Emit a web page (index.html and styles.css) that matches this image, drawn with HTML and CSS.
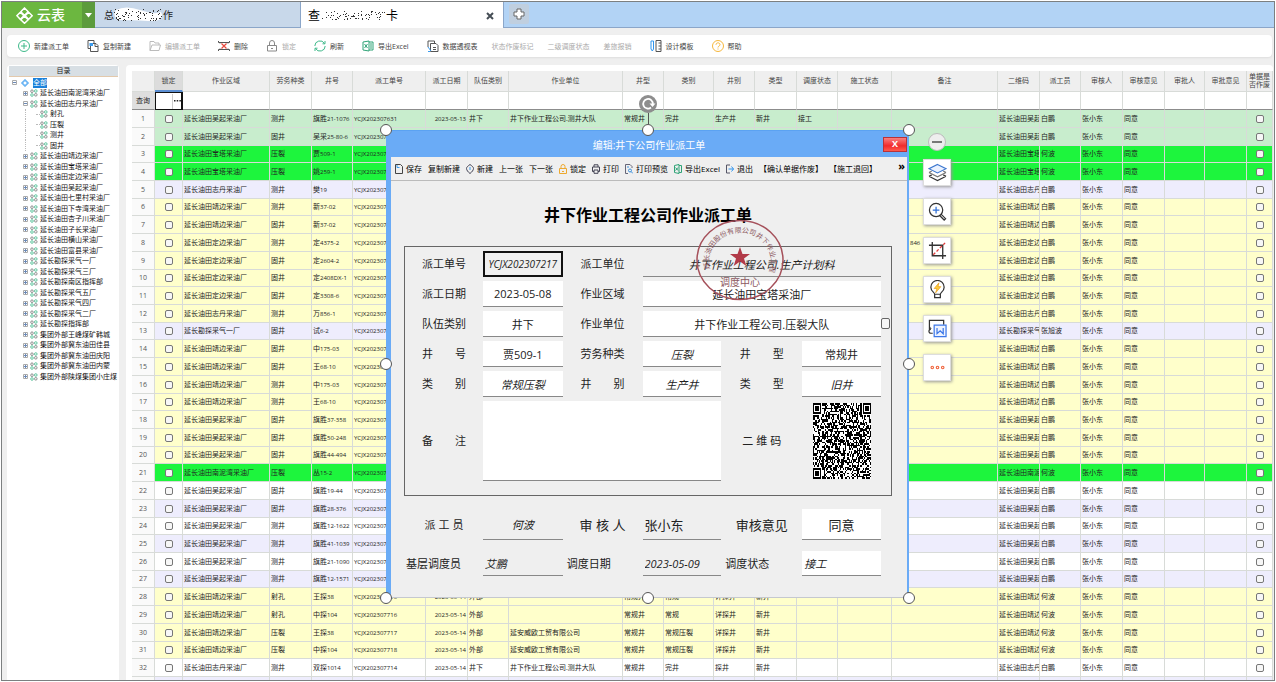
FILE: index.html
```html
<!DOCTYPE html>
<html lang="zh-CN">
<head>
  <meta charset="utf-8">
  <title>云表</title>
  <link rel="stylesheet" href="styles.css">
</head>
<body>
  <div class="app">
    <header class="titlebar">
      <a class="logo" href="#">
        <svg width="17" height="17" viewBox="0 0 17 17" fill="none" stroke="#fff" stroke-width="1.5">
          <path d="M8.500 1l3.700 3.700-3.700 3.700-3.700-3.700zM4.300 5.200l3.600 3.500-3.600 3.600L.9 8.700zM12.700 5.200l3.500 3.500-3.500 3.600-3.600-3.600zM8.500 9.200l3.700 3.500-3.700 3.600-3.700-3.600z"/>
        </svg>
        <span>云表</span>
      </a>
      <button class="logo-menu" aria-label="菜单"><svg width="7" height="5" viewBox="0 0 7 5"><path d="M0 0h7L3.500 4.500z" fill="#fff"/></svg></button>
      <div class="tab tab-first"><span>总</span><svg class="smudge" data-seed="3" data-white="1" width="49" height="16" viewBox="0 0 49 16"></svg><span>作</span></div>
      <div class="tab tab-active"><span>查</span><svg class="smudge" data-seed="9" width="66" height="13" viewBox="0 0 66 13"></svg><span>卡</span>
        <button class="tab-close" aria-label="关闭"><svg width="8" height="8" viewBox="0 0 8 8"><path d="M1 1l6 6M7 1L1 7" stroke="#454d55" stroke-width="2"/></svg></button>
      </div>
      <button class="tab-add" aria-label="新标签"><svg width="12" height="12" viewBox="0 0 12 12"><path d="M4 1h4v3h3v4H8v3H4V8H1V4h3z" fill="#fff" stroke="#666" stroke-width="1"/></svg></button>
    </header>

    <nav class="toolbar">
      <button><svg viewBox="0 0 12 12" fill="none" stroke="#3fb98a"><circle cx="6" cy="6" r="5.500"/><path d="M6 3v6M3 6h6"/></svg>新建派工单</button>
      <button><svg viewBox="0 0 12 12" fill="none" stroke="#555"><path d="M3.500 3.500H9L11 5.500v6H3.500zM8 3.500v3h3"/><path d="M3 8.500H1v-8h6V3"/><path d="M2.500 3h3.500v3H2.500z" fill="#3a9cf0" stroke="none"/></svg>复制新建</button>
      <button disabled><svg viewBox="0 0 12 12" fill="none" stroke="#bbb"><path d="M1 10.500v-9h4l1 1.500h4v2M1 10.500L3 5h8.500l-1.500 5.500z"/></svg>编辑派工单</button>
      <button><svg viewBox="0 0 12 12" fill="none" stroke="#555"><path d="M.5 1v1.500h11V1M.5 11V9.500h11V11M2 2.500v1M10 2.500v1M2 9.500v-1M10 9.500v-1"/><path d="M3.500 3.500l5 5M8.500 3.500l-5 5" stroke="#e8483c" stroke-width="1.200"/></svg>删除</button>
      <button disabled><svg viewBox="0 0 12 12" fill="none" stroke="#888"><path d="M1.500 5.500h9v5.500h-9zM3.500 5.500V3a2.500 2.500 0 0 1 5 0v2.500M5 8.500h2"/></svg>锁定</button>
      <button><svg viewBox="0 0 12 12" fill="none" stroke="#3fb98a"><path d="M.8 6A5.200 5.200 0 0 1 10.500 3.500M11.200 6a5.200 5.200 0 0 1-9.700 2.500"/><path d="M11 1v2.800H8.500M1 11V8.200h2.500"/></svg>刷新</button>
      <button><svg viewBox="0 0 12 12" fill="none" stroke="#2fa377"><path d="M1 2l6-1v10l-6-1zM7 2h4v8H7"/><path d="M2.500 4l3 4M5.500 4l-3 4"/><path d="M9 3v6"/></svg>导出Excel</button>
      <button><svg viewBox="0 0 12 12" fill="none" stroke="#555"><path d="M1 7V1h6.500v2M3.500 3.500H9l2 2v6H3.500zM6 7.500h3M6 9.500h3"/><path d="M1 7l3 4M1 11.500h2" stroke="#3a9cf0"/></svg>数据透视表</button>
      <button class="plain" disabled>状态作废标记</button>
      <button class="plain" disabled>二级调度状态</button>
      <button class="plain" disabled>差旅报销</button>
      <button><svg viewBox="0 0 12 12" fill="none" stroke="#555"><path d="M6 .5h5v11H6zM8.500 3H11M8.500 6H11M8.500 9H11"/><path d="M1 1h2.500v8L2.300 11 1 9z" stroke="#2f95ee"/></svg>设计模板</button>
      <button><svg viewBox="0 0 12 12" fill="none" stroke="#f6b73c"><circle cx="6" cy="6" r="5.500"/><path d="M4 4.800c0-2.600 4-2.600 4 0C8 6 6 6 6 7.500M6 8.500v1"/></svg>帮助</button>
    </nav>

    <div class="workspace">
      <aside class="sidebar">
        <div class="sidebar-title">目录</div>
        <ul class="tree" id="tree"></ul>
      </aside>
      <main class="sheet">
        <table class="grid">
          <colgroup id="cols"></colgroup>
          <thead>
            <tr class="head" id="head"></tr>
            <tr class="query" id="query"></tr>
          </thead>
          <tbody id="rows"></tbody>
        </table>
      </main>
    </div>
  </div>

  <section class="frame">
    <div class="dialog">
      <div class="dialog-title"><span>编辑:井下公司作业派工单</span><button class="close">X</button></div>
      <div class="dialog-tools">
        <button><svg viewBox="0 0 8 10" fill="none" stroke="#444"><path d="M.5 .5h5L7.500 2.500v7h-7z"/><path d="M2 1v2.500h2.500" stroke="#3a9cf0"/></svg>保存</button>
        <button>复制新建</button>
        <button><svg viewBox="0 0 8 10" fill="none" stroke="#445"><path d="M4 .5C6 2 7.500 3 7.500 4.500S6 8 4 9.500C2 8 .5 6 .5 4.500S2 2 4 .5z"/><path d="M4 3v3" stroke="#3a9cf0"/></svg>新建</button>
        <button>上一张</button>
        <button>下一张</button>
        <button><svg viewBox="0 0 8 10" fill="none" stroke="#eda92f"><path d="M.5 4.500h7v5h-7zM2 4.500V2.500a2 2 0 0 1 4 0v2M3 7.500h2"/></svg>锁定</button>
        <button><svg viewBox="0 0 8 10" fill="none" stroke="#445"><path d="M2 3V.8h4V3M2 7.500H.5V3h7v4.500H6M2 6h4v3.300H2z"/></svg>打印</button>
        <button><svg viewBox="0 0 8 10" fill="none" stroke="#3a8fdc"><path d="M3 9.500H.5v-9H5L7 2.500V4" stroke="#667"/><circle cx="5" cy="6.500" r="1.500"/><path d="M6 7.500l2 2M2 3h2"/></svg>打印预览</button>
        <button><svg viewBox="0 0 8 10" fill="none" stroke="#2fa377"><path d="M.5 1.500L5 .5v9L.5 8.500zM5 1.500h2.500v7H5M1.500 3.500l2.500 3M4 3.500l-2.500 3"/></svg>导出Excel</button>
        <button><svg viewBox="0 0 8 10" fill="none" stroke="#2f95ee"><path d="M4 1H.5v8H4" stroke="#556"/><path d="M2.500 5h5M5.500 2.500L7.500 5l-2 2.500"/></svg>退出</button>
        <button>【确认单据作废】</button>
        <button>【施工退回】</button>
        <button class="more">»</button>
      </div>

      <form class="order">
        <h1>井下作业工程公司作业派工单</h1>
        <div class="box">
          <label for="no">派工单号</label><input id="no" class="current" value="YCJX202307217">
          <label for="unit">派工单位</label><input id="unit" class="wide calc" value="井下作业工程公司.生产计划科">
          <label for="date">派工日期</label><input id="date" value="2023-05-08">
          <label for="area">作业区域</label><input id="area" class="wide" value="延长油田宝塔采油厂">
          <label for="team">队伍类别</label><input id="team" value="井下">
          <label for="workunit">作业单位</label><input id="workunit" class="wide" value="井下作业工程公司.压裂大队">
          <label for="well">井 号</label><input id="well" value="贾509-1">
          <label for="service">劳务种类</label><input id="service" class="slant" value="压裂">
          <label for="welltype">井 型</label><input id="welltype" value="常规井">
          <label for="kind">类 别</label><input id="kind" class="slant" value="常规压裂">
          <label for="wellkind">井 别</label><input id="wellkind" class="slant" value="生产井">
          <label for="type">类 型</label><input id="type" class="slant" value="旧井">
          <label for="remark">备 注</label><textarea id="remark"></textarea>
          <span class="label short">二 维 码</span><svg class="qr" id="qr" viewBox="0 0 49 49" preserveAspectRatio="none" shape-rendering="crispEdges"></svg>
          <input type="checkbox" class="box-check" aria-label="选择作业单位">
        </div>
        <div class="sign">
          <label for="sender" class="short">派 工 员</label><input id="sender" class="calc" value="何波">
          <label for="auditor" class="big">审 核 人</label><input id="auditor" class="bare big" value="张小东">
          <label for="opinion" class="big">审核意见</label><input id="opinion" class="big" value="同意">
        </div>
        <div class="dispatch">
          <label for="base">基层调度员</label><input id="base" class="calc left" value="艾鹏">
          <label for="ddate">调度日期</label><input id="ddate" class="calc left" value="2023-05-09">
          <label for="dstate">调度状态</label><input id="dstate" class="slant left" value="接工">
        </div>
        <svg class="seal" viewBox="0 0 88 82" width="88" height="82">
          <ellipse cx="44" cy="41" rx="43" ry="39.500" fill="none" stroke="#a5505a" stroke-width="1.500"/>
          <path id="arc" d="M14 50A31 29 0 1 1 74 50" fill="none"/>
          <text class="seal-ring"><textPath href="#arc">延长油田股份有限公司井下作业工程</textPath></text>
          <path d="M44 28l2.500 7h7.500l-6 4.500 2.300 7.500-6.300-4.500-6.300 4.500 2.300-7.500-6-4.500h7.500z" fill="#b23a48"/>
          <text class="seal-name" x="44" y="67" text-anchor="middle">调度中心</text>
        </svg>
      </form>
    </div>
    <span class="handle nw"></span><span class="handle n"></span><span class="handle ne"></span>
    <span class="handle w"></span><span class="handle e"></span>
    <span class="handle sw"></span><span class="handle s"></span><span class="handle se"></span>
    <span class="stem"></span>
    <span class="rotate"><svg width="18" height="18" viewBox="0 0 18 18"><circle cx="9" cy="9" r="9" fill="#8d8d8d"/><path d="M12 12.500A4.800 4.800 0 1 1 13.800 9" fill="none" stroke="#fff" stroke-width="1.800"/><path d="M10.500 8.500h6L13.500 12z" fill="#fff"/></svg></span>
  </section>

  <div class="floating">
    <button class="minus" aria-label="收起"><svg width="10" height="4" viewBox="0 0 10 4"><path d="M0 2h10" stroke="#777" stroke-width="2"/></svg></button>
    <button class="tool" aria-label="图层"><svg viewBox="0 0 20 20" fill="none" stroke="#333" stroke-width="1.200"><path d="M1 14l9 4.500 9-4.500M1 14l3-1.500M19 14l-3-1.500"/><path d="M1 10l9 4.500 9-4.500M1 10l3-1.500M19 10l-3-1.500" stroke="#777"/><path d="M10 1.500L19 6l-9 4.500L1 6z" fill="#eaf2ff" stroke="#3d78cf"/></svg></button>
    <button class="tool" aria-label="放大"><svg viewBox="0 0 20 20" fill="none" stroke="#333" stroke-width="1.300"><circle cx="8.500" cy="8.500" r="7"/><path d="M13.500 12.500l5 5-1.500 1.500-5-5"/><path d="M8.500 5v7M5 8.500h7" stroke="#2f6fd6"/></svg></button>
    <button class="tool" aria-label="裁剪"><svg viewBox="0 0 20 20" fill="none" stroke="#333" stroke-width="1.400"><path d="M4.500 1v14.500H19M1 4.500h14.500V19"/><path d="M5.500 14.500L18 2" stroke="#e03a3a" stroke-dasharray="3 2"/></svg></button>
    <button class="tool" aria-label="提示"><svg viewBox="0 0 20 20" fill="none" stroke="#333" stroke-width="1.300"><path d="M7 15c0-2-4-3-4-7.500a7 7 0 0 1 14 0C17 12 13 13 13 15zM7 15v3.500h6V15"/><path d="M11.500 3l-5 6h3l-1.500 4.500 5.500-6.500h-3z" fill="#ffcf3d" stroke="#e8a020" stroke-width=".8"/></svg></button>
    <button class="tool" aria-label="转为文档"><svg viewBox="0 0 20 20" fill="none" stroke="#333" stroke-width="1.300"><path d="M5 15H3a2 2 0 0 1 0-4M1.500 11V1.500h15V6M1.500 8a2 2 0 0 0 2 2"/><path d="M6.500 6.500h12.500v12H6.500z" fill="#edf3ff" stroke="#3d78e8"/><path d="M9.500 9.500v6l3.300-3 3.200 3v-6" stroke="#3d78e8"/></svg></button>
    <button class="tool" aria-label="更多"><svg viewBox="0 0 20 20" fill="none" stroke="#f0643c" stroke-width="1.200"><circle cx="4.500" cy="10" r="1.300"/><circle cx="10" cy="10" r="1.300"/><circle cx="15.500" cy="10" r="1.300"/></svg></button>
  </div>

  <script src="script.js"></script>
</body>
</html>
```

FILE: styles.css
```css
* {
  box-sizing: border-box;
}
body {
  margin: 1px;
  font-family: "Open Sans", "Noto Sans CJK SC", sans-serif;
  font-size: 7px;
  color: #222;
  background: #fff;
  overflow: hidden;
}
button, input, textarea {
  font: inherit;
  color: inherit;
  margin: 0;
}
button {
  border: none;
  background: none;
  padding: 0;
  cursor: pointer;
}
.app {
  display: flex;
  flex-direction: column;
  height: calc(100vh - 2px);
  border: 1px solid #7c7f80;
  background: #efefef;
}

/* tabs */
.titlebar {
  display: flex;
  flex: none;
  height: 26px;
  background: #b2d3f5;
  border-bottom: 1px solid #8ba6c9;
}
.logo {
  display: flex;
  align-items: center;
  gap: 4px;
  width: 80px;
  padding-left: 14px;
  height: 26px;
  background: #6cb740;
  color: #fff;
  font-size: 14px;
  font-weight: 500;
  line-height: 20px;
  text-decoration: none;
}
.logo-menu {
  width: 13px;
  height: 26px;
  background: #5c9b3c;
}
.tab {
  display: flex;
  align-items: center;
  width: 205px;
  padding-left: 9px;
  font-size: 10px;
  background: #c8d8ea;
}
.tab-active {
  width: 204px;
  height: 26px;
  padding: 0 9px 0 7px;
  background: #fff;
  border-left: 1px solid #8ba6c9;
  border-right: 1px solid #8ba6c9;
  font-size: 12px;
  color: #000;
}
.tab-close {
  margin-left: auto;
}
.tab-add {
  display: flex;
  align-items: center;
  justify-content: center;
  width: 20px;
  height: 20px;
  margin: 2px 5px;
  border-radius: 2px;
  background: #c0cfdf;
}

/* main toolbar */
.toolbar {
  display: flex;
  flex: none;
  gap: 14px;
  height: 22px;
  margin: 7px 2px 8px 5px;
  padding-left: 7px;
  border-radius: 4px;
  background: #fff;
  box-shadow: 0 1px 2px #ddd;
  color: #444;
}
.toolbar button {
  display: flex;
  align-items: center;
  gap: 4px;
  padding-left: 4px;
  white-space: nowrap;
}
.toolbar .plain {
  padding-left: 0;
}
.toolbar button:disabled {
  color: #aaa;
}
.toolbar svg {
  width: 12px;
  height: 12px;
}

.workspace {
  display: flex;
  flex: 1;
  gap: 7px;
  min-height: 0;
  padding: 0 1px 0 5px;
}

/* tree */
.sidebar {
  width: 112px;
  flex: none;
  padding: 1px 1px 0 2px;
  border-radius: 4px 4px 0 0;
  background: #fff;
}
.sidebar-title {
  height: 11px;
  line-height: 10px;
  text-align: center;
  background: #d8dfe4;
  border-bottom: 1px solid #e3c9ac;
}
.tree {
  list-style: none;
  margin: 0;
  padding: 0;
}
.tree li {
  display: flex;
  align-items: center;
  gap: 2px;
  height: 10px;
  padding-left: 14px;
  line-height: 10px;
  white-space: nowrap;
  color: #111;
}
.tree li:nth-child(odd) {
  height: 11px;
}
.tree .root {
  padding-left: 3px;
  gap: 4px;
}
.tree .leaf {
  margin-left: 16px;
  padding-left: 10px;
  border-left: 1px dotted #bbb;
}
.tree .leaf::before {
  content: "";
  width: 4px;
  margin-right: -2px;
  border-top: 1px dotted #bbb;
}
.tree .root span {
  background: #1a80d9;
  color: #fff;
}
.tree svg {
  flex: none;
}
.tree .toggle {
  width: 5px;
  height: 5px;
}
.tree .node {
  width: 8px;
  height: 8px;
}

/* data grid */
.sheet {
  flex: 1;
  min-width: 0;
  padding: 6px 0 0 6px;
  border-radius: 4px 4px 0 0;
  background: #fff;
  overflow: hidden;
}
.grid {
  width: 100%;
  table-layout: fixed;
  border-collapse: separate;
  border-spacing: 0;
}
.grid th, .grid td {
  padding: 0 1px;
  border-right: 1px solid #d8dbd8;
  border-bottom: 1px solid #d8dbd8;
  line-height: 8px;
  font-weight: normal;
  text-align: left;
  white-space: nowrap;
  overflow: hidden;
}
.grid .head th {
  height: 21px;
  background: #efefef;
  color: #444;
  text-align: center;
  white-space: normal;
}
.grid .head .picked {
  background: #dcdcdc;
  border-bottom: 2px solid #5b8ed2;
}
.grid .query td, .grid .query th {
  height: 18px;
  border-bottom-color: #8c8c8c;
}
.grid .query th {
  background: #dedede;
  text-align: center;
}
.grid .query .picked {
  padding: 0;
  border: 1px solid #111;
  border-right-width: 2px;
}
.grid .query button {
  display: flex;
  align-items: center;
  justify-content: center;
  width: 9px;
  height: 15px;
  margin-left: auto;
  border-left: 1px solid #ccc;
}
.grid tbody tr {
  height: 18px;
}
.grid tbody tr:nth-child(7n+3), .grid tbody tr:nth-child(7n+6) {
  height: 17px;
}
.grid tbody th {
  background: #fafafa;
  color: #555;
  text-align: center;
}
.grid .code, .grid small {
  font-size: 6px;
}
.grid .date {
  font-size: 6px;
  text-align: right;
}
.grid .remark {
  font-size: 6px;
  padding-left: 18px;
}
.grid .tick {
  text-align: center;
}
.grid input {
  display: block;
  appearance: none;
  width: 8px;
  height: 8px;
  margin: 0 auto;
  border: 1px solid #777;
  border-radius: 2px;
  background: #f7f7f7;
}
.mint {
  background: #c8edcd;
}
.green {
  background: #1df53d;
}
.lilac {
  background: #eeedfd;
}
.yellow {
  background: #ffffcb;
}

/* dialog with its selection frame */
.frame {
  position: absolute;
  left: 386px;
  top: 130px;
  width: 523px;
}
.dialog {
  border: 1px solid #c5c8cf;
  border-top: 1px solid #5ba2f2;
  border-left: 5px solid #6aabf6;
  border-right: 2px solid #6aabf6;
  background: #efefef;
}
.dialog-title {
  display: flex;
  align-items: center;
  height: 26px;
  background: #6aabf6;
  color: #fff;
  font-size: 10px;
}
.dialog-title span {
  flex: 1;
  padding-left: 24px;
  text-align: center;
}
.close {
  width: 24px;
  height: 15px;
  border: 1px solid #b93238;
  background: linear-gradient(#f98080, #f12a2c 60%, #ff5a4c);
  color: #fff;
  font-size: 9px;
  font-weight: bold;
  line-height: 12px;
}
.dialog-tools {
  display: flex;
  gap: 6px;
  height: 24px;
  padding-left: 4px;
  border-bottom: 1px solid #bbb;
  font-size: 8px;
  color: #000;
}
.dialog-tools button {
  display: flex;
  align-items: center;
  gap: 3px;
  flex: none;
}
.dialog-tools svg {
  width: 8px;
  height: 10px;
}
.dialog-tools .more {
  margin: 0 2px 6px auto;
  font-size: 11px;
  font-weight: bold;
}
.order {
  position: relative;
  padding: 22px 15px 21px 13px;
  font-size: 11px;
}
.order h1 {
  margin: 0 0 19px;
  font-size: 16px;
  line-height: 24px;
  text-align: center;
  color: #000;
}
.box {
  position: relative;
  display: grid;
  grid-template-columns: 78fr 80fr 80fr 79fr 81fr 79fr;
  grid-template-rows: repeat(5, 26px) 80px;
  row-gap: 4px;
  padding: 4px 10px 14px 0;
  border: 1px solid #666;
}
.order label, .label {
  align-self: center;
  justify-self: center;
  width: 44px;
  line-height: 16px;
  white-space: nowrap;
  text-align: justify;
  text-align-last: justify;
}
.order .short {
  width: 39px;
}
.order input, .order textarea {
  min-width: 0;
  width: 100%;
  padding: 0 2px;
  border: none;
  border-bottom: 1px solid #888;
  border-radius: 0;
  background: #fff;
  text-align: center;
  resize: none;
}
.order .wide {
  grid-column: span 3;
}
.order textarea {
  grid-column: span 3;
}
.order .slant {
  font-style: italic;
}
.order .calc {
  font-style: italic;
  background: transparent;
}
.order .current {
  padding: 0;
  border: 2px solid #111;
  background: transparent;
  font-size: 10px;
  font-style: italic;
}
.order .left {
  text-align: left;
}
.order .bare {
  background: transparent;
  text-align: left;
}
.order .box-check {
  position: absolute;
  right: 1px;
  top: 71px;
  width: 9px;
  height: 11px;
  appearance: none;
  border: 1px solid #666;
  border-radius: 2px;
  background: #f7f7f7;
}
.qr {
  align-self: center;
  justify-self: center;
  width: 58px;
  height: 76px;
  background: #fff;
}
.sign, .dispatch {
  display: grid;
  grid-template-columns: 78fr 80fr 80fr 79fr 81fr 79fr;
  height: 31px;
  margin-top: 13px;
  padding: 0 11px 0 1px;
}
.dispatch {
  height: 25px;
  margin-top: 11px;
}
.dispatch label {
  width: auto;
  justify-self: start;
  padding-left: 4px;
}
.dispatch label:first-child {
  padding-left: 1px;
}
.order .big {
  font-size: 13px;
}
.order label.big {
  width: 52px;
}
.order label.big[for="auditor"] {
  width: 46px;
}
.seal {
  position: absolute;
  left: 305px;
  top: 38px;
  pointer-events: none;
}
.seal text {
  fill: #8d5a62;
}
.seal-ring {
  font-size: 7px;
}
.seal-name {
  font-size: 10px;
}

.handle {
  position: absolute;
  width: 12px;
  height: 12px;
  margin: -6px;
  border: 1px solid #555;
  border-radius: 50%;
  background: #fff;
}
.nw, .w, .sw {
  left: 0;
}
.n, .s {
  left: 50%;
}
.ne, .e, .se {
  left: 100%;
}
.nw, .n, .ne {
  top: 0;
}
.w, .e {
  top: 50%;
}
.sw, .s, .se {
  top: 100%;
}
.stem {
  position: absolute;
  left: 50%;
  top: -17px;
  height: 11px;
  border-left: 1px solid #555;
}
.rotate {
  position: absolute;
  left: 50%;
  top: -35px;
  width: 18px;
  height: 18px;
  margin-left: -9px;
}

/* buttons next to the frame */
.floating {
  position: absolute;
  left: 923px;
  top: 133px;
  display: flex;
  flex-direction: column;
  align-items: center;
  gap: 12px;
}
.minus {
  display: flex;
  align-items: center;
  justify-content: center;
  width: 18px;
  height: 18px;
  margin-bottom: -4px;
  border: 1px solid #bbb;
  border-radius: 50%;
  background: #eee;
}
.tool {
  display: flex;
  align-items: center;
  justify-content: center;
  width: 28px;
  height: 27px;
  border: 1px solid #ddd;
  background: #fff;
  box-shadow: 1px 1px 3px #999;
}
.tool svg {
  width: 19px;
  height: 19px;
}
```

FILE: script.js
```js
const columns = [
  ["", 23], ["锁定", 28], ["作业区域", 87], ["劳务种类", 42], ["井号", 41], ["派工单号", 73],
  ["派工日期", 42], ["队伍类别", 41], ["作业单位", 114], ["井型", 41], ["类别", 50], ["井别", 41],
  ["类型", 42], ["调度状态", 41], ["施工状态", 54], ["备注", 0], ["二维码", 42], ["派工员", 41],
  ["审核人", 42], ["审核意见", 42], ["审批人", 40], ["审批意见", 42], ["单据是否作废", 26]
];

const team = "井下作业工程公司.测井大队";
const company = "延安威欧工贸有限公司";

// colour, area, service, well, sender, order no, date, team type, unit, well type, category, well kind, type, state
const rows = [
  ["mint", "延长油田吴起采油厂", "测井", "旗胜21-1076", "白鹏", "YCJX202307631", "2023-05-13", "井下", team, "常规井", "完井", "生产井", "新井", "接工"],
  ["mint", "延长油田吴起采油厂", "固井", "吴采25-80-6", "白鹏"],
  ["green", "延长油田宝塔采油厂", "压裂", "贾509-1", "何波"],
  ["green", "延长油田宝塔采油厂", "压裂", "姚259-1", "何波"],
  ["lilac", "延长油田志丹采油厂", "测井", "樊19", "白鹏"],
  ["yellow", "延长油田靖边采油厂", "测井", "新37-02", "白鹏"],
  ["yellow", "延长油田靖边采油厂", "固井", "新37-02", "白鹏"],
  ["yellow", "延长油田定边采油厂", "测井", "定4375-2", "白鹏"],
  ["yellow", "延长油田定边采油厂", "固井", "定2604-2", "白鹏"],
  ["yellow", "延长油田定边采油厂", "固井", "定2408DX-1", "白鹏"],
  ["yellow", "延长油田定边采油厂", "固井", "定3308-6", "白鹏"],
  ["yellow", "延长油田志丹采油厂", "测井", "万856-1", "白鹏"],
  ["lilac", "延长勘探采气一厂", "固井", "试6-2", "张旭波"],
  ["yellow", "延长油田靖边采油厂", "固井", "中175-03", "白鹏"],
  ["yellow", "延长油田靖边采油厂", "固井", "王68-10", "白鹏"],
  ["yellow", "延长油田靖边采油厂", "测井", "中175-03", "白鹏"],
  ["yellow", "延长油田靖边采油厂", "测井", "王68-10", "白鹏"],
  ["yellow", "延长油田吴起采油厂", "固井", "旗胜37-358", "白鹏"],
  ["yellow", "延长油田吴起采油厂", "固井", "旗胜50-248", "白鹏"],
  ["yellow", "延长油田吴起采油厂", "固井", "旗胜44-494", "白鹏"],
  ["green", "延长油田南泥湾采油厂", "压裂", "丛15-2", "何波"],
  ["", "延长油田吴起采油厂", "固井", "旗胜19-44", "白鹏"],
  ["lilac", "延长油田吴起采油厂", "固井", "旗胜28-376", "白鹏"],
  ["", "延长油田吴起采油厂", "测井", "旗胜12-1622", "白鹏"],
  ["lilac", "延长油田吴起采油厂", "测井", "旗胜41-1039", "白鹏"],
  ["", "延长油田吴起采油厂", "测井", "旗胜21-1090", "白鹏"],
  ["lilac", "延长油田吴起采油厂", "测井", "旗胜12-1571", "白鹏"],
  ["yellow", "延长油田靖边采油厂", "射孔", "王探38", "何波", "YCJX202307715", "2023-05-14", "外部", "", "常规井", "常规", "详探井", "新井"],
  ["yellow", "延长油田靖边采油厂", "射孔", "中探104", "何波", "YCJX202307716", "2023-05-14", "外部", "", "常规井", "常规", "详探井", "新井"],
  ["yellow", "延长油田靖边采油厂", "压裂", "王探38", "何波", "YCJX202307717", "2023-05-14", "外部", company, "常规井", "常规压裂", "详探井", "新井"],
  ["yellow", "延长油田靖边采油厂", "压裂", "中探104", "何波", "YCJX202307718", "2023-05-14", "外部", company, "常规井", "常规压裂", "详探井", "新井"],
  ["", "延长油田志丹采油厂", "测井", "双探1014", "白鹏", "YCJX202307714", "2023-05-14", "井下", team, "常规井", "完井", "探井", "新井"]
];

document.getElementById("cols").innerHTML = columns
  .map(c => c[1] ? `<col style="width:${c[1]}px">` : "<col>").join("");
document.getElementById("head").innerHTML = columns
  .map((c, i) => `<th${i === 1 ? ' class="picked"' : ""}>${c[0]}</th>`).join("");
document.getElementById("query").innerHTML = '<th>查询</th><td class="picked"><button aria-label="选择"><svg width="7" height="2" viewBox="0 0 7 2"><path d="M0 0h1.500v1.500H0zM2.700 0h1.500v1.500H2.700zM5.400 0h1.500v1.500H5.400z" fill="#222"/></svg></button></td>' + "<td></td>".repeat(21);

const check = n => `<td class="tick"><input type="checkbox" aria-label="${n}"></td>`;
document.getElementById("rows").innerHTML = rows.map((r, i) => {
  const [color, area, service, well, sender, no = "YCJX202307", date = "", ...rest] = r;
  while (rest.length < 8) rest.push("");
  return `<tr class="${color}"><th>${i + 1}</th>${check("锁定")}
    <td>${area}</td><td>${service}</td><td>${well.replace(/[\dA-Z-]+/, "<small>$&</small>")}</td>
    <td class="code">${no}</td><td class="date">${date}</td>
    ${rest.map(t => `<td>${t}</td>`).join("")}
    <td class="remark">${i === 7 ? "846" : ""}</td>
    <td>${area.slice(0, 6)}</td><td>${sender}</td><td>张小东</td><td>同意</td><td></td><td></td>${check("作废")}</tr>`;
}).join("") + `<tr class="lilac"><th></th>${"<td></td>".repeat(22)}</tr>`;

// directory tree
const areas = ["延长油田南泥湾采油厂", "延长油田志丹采油厂", "-射孔", "-压裂", "-测井", "-固井",
  "延长油田靖边采油厂", "延长油田宝塔采油厂", "延长油田定边采油厂", "延长油田吴起采油厂",
  "延长油田七里村采油厂", "延长油田下寺湾采油厂", "延长油田杏子川采油厂", "延长油田子长采油厂",
  "延长油田横山采油厂", "延长油田富县采油厂", "延长勘探采气一厂", "延长勘探采气三厂",
  "延长勘探南区指挥部", "延长勘探采气五厂", "延长勘探采气四厂", "延长勘探采气二厂",
  "延长勘探指挥部", "集团外部王峰煤矿韩城", "集团外部冀东油田佳县", "集团外部冀东油田庆阳",
  "集团外部冀东油田内蒙", "集团外部陕煤集团小庄煤"];
const toggle = open => `<svg class="toggle" viewBox="0 0 5 5"><path d="M.5 .5h4v4h-4z" fill="#fff" stroke="#aaa"/><path d="M1 2.500h3${open ? "" : "M2.500 1v3"}" stroke="#6b8ab8"/></svg>`;
const node = '<svg class="node" viewBox="0 0 8 8" fill="none" stroke-width=".8"><circle cx="2" cy="2.200" r="1.300" stroke="#777"/><circle cx="5.800" cy="5.800" r="1.300" stroke="#777"/><circle cx="5.800" cy="2" r="1.300" stroke="#3fb98a"/><circle cx="2" cy="6" r="1.300" stroke="#3fb98a"/></svg>';
const rootIcon = '<svg class="node" viewBox="0 0 8 8" fill="none" stroke="#3a9cf0"><path d="M2 2h4v4H2zM4 0v2M4 6v2M0 4h2M6 4h2"/></svg>';
document.getElementById("tree").innerHTML = `<li class="root">${toggle(true)}${rootIcon}<span>全部</span></li>` +
  areas.map(a => a[0] === "-"
    ? `<li class="leaf">${node}<span>${a.slice(1)}</span></li>`
    : `<li>${toggle(a.includes("志丹"))}${node}<span>${a}</span></li>`).join("");

function random(seed) {
  return () => (seed = (seed * 16807) % 2147483647) / 2147483647;
}

// qr code
const rnd = random(20230508);
const size = 49;
let modules = "";
for (let y = 0; y < size; y++) {
  for (let x = 0; x < size; x++) {
    const corner = (x < 8 && y < 8) || (x > 40 && y < 8) || (x < 8 && y > 40);
    if (!corner && rnd() < 0.52) modules += `M${x} ${y}h1v1h-1z`;
  }
}
for (const [x, y] of [[0, 0], [42, 0], [0, 42]]) {
  modules += `M${x} ${y}h7v7h-7zM${x + 1} ${y + 1}v5h5v-5zM${x + 2} ${y + 2}h3v3h-3z`;
}
document.getElementById("qr").innerHTML = `<path d="${modules}" fill="#000" fill-rule="evenodd"/>`;

// scribbled out parts of the tab names
document.querySelectorAll(".smudge").forEach(svg => {
  const next = random(svg.dataset.seed * 7919);
  const w = svg.viewBox.baseVal.width;
  const h = svg.viewBox.baseVal.height;
  let d = "";
  for (let i = 0; i < 70; i++) {
    d += `M${Math.floor(next() * w)} ${Math.floor(2 + next() * (h - 4))}h1v1h-1z`;
  }
  const blob = svg.dataset.white ? `<path d="M2 3Q12-2 26 3T47 5Q52 15 34 14T4 13Q-2 8 2 3z" fill="#fff"/>` : "";
  svg.innerHTML = blob + `<path d="${d}" fill="#333"/>`;
});
```
